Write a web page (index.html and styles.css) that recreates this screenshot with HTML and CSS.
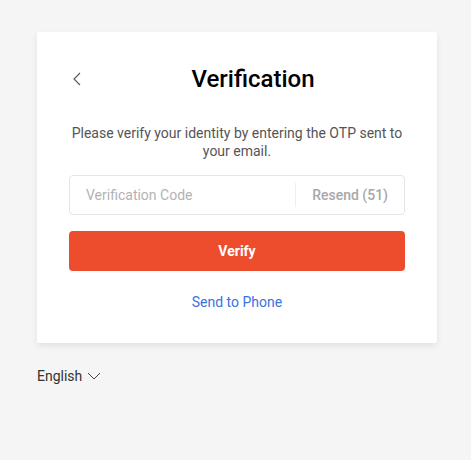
FILE: index.html
```html
<!DOCTYPE html>
<html lang="en">
<head>
  <meta charset="UTF-8">
  <title>Verification</title>
  <link rel="stylesheet" href="styles.css">
</head>
<body>
  <div class="card">
    <div class="header">
      <button class="back" aria-label="Back">
        <svg width="10" height="14" viewBox="0 0 10 14"><path d="M8 1 L2 7 L8 13" fill="none" stroke="#555" stroke-width="1.1"/></svg>
      </button>
      <h2>Verification</h2>
    </div>
    <p class="info">Please verify your identity by entering the OTP sent to your email.</p>
    <div class="code-box">
      <input type="text" placeholder="Verification Code">
      <span class="divider"></span>
      <span class="resend">Resend (51)</span>
    </div>
    <button class="verify">Verify</button>
    <a class="alt" href="#">Send to Phone</a>
  </div>
  <div class="lang">
    English
    <svg width="14" height="10" viewBox="0 0 14 10"><path d="M1 2 L7 8 L13 2" fill="none" stroke="#444" stroke-width="1"/></svg>
  </div>
</body>
</html>
```

FILE: styles.css
```css
body {
  margin: 0;
  padding: 32px 37px;
  background: #f5f5f5;
  font-family: Roboto, 'Liberation Sans', sans-serif;
  font-size: 14px;
}
.card {
  width: 400px;
  box-sizing: border-box;
  background: white;
  padding: 31px 32px 32px;
  box-shadow: 0 3px 6px rgba(0,0,0,0.08);
  border-radius: 2px;
  display: flex;
  flex-direction: column;
}
.header {
  height: 32px;
  display: flex;
  align-items: center;
}
.header h2 {
  flex: 1;
  margin: 0;
  text-align: center;
  font-size: 24px;
  font-weight: 500;
  color: #000;
}
.back {
  width: 32px;
  flex-shrink: 0;
  padding: 0 0 0 3px;
  background: none;
  border: none;
  cursor: pointer;
  display: flex;
}
.info {
  margin: 29px 0 0;
  text-align: center;
  line-height: 18px;
  color: #555;
}
.code-box {
  margin-top: 15px;
  height: 40px;
  box-sizing: border-box;
  border: 1px solid #e5e5e5;
  border-radius: 4px;
  display: flex;
  align-items: center;
}
.code-box input {
  flex: 1;
  min-width: 0;
  border: none;
  outline: none;
  padding: 0 0 0 16px;
  font-family: inherit;
  font-size: 14px;
  background: transparent;
}
.code-box input::placeholder {
  color: #b3b3b3;
}
.divider {
  width: 1px;
  height: 24px;
  background: #eee;
}
.resend {
  padding: 0 16px;
  color: #a8a8a8;
  font-weight: 500;
}
.verify {
  margin-top: 16px;
  height: 40px;
  border: none;
  border-radius: 4px;
  background: #ee4d2d;
  color: white;
  font-family: inherit;
  font-size: 14px;
  font-weight: 700;
  cursor: pointer;
}
.alt {
  margin-top: 22px;
  align-self: center;
  line-height: 18px;
  color: #3a72e0;
  text-decoration: none;
}
.lang {
  margin-top: 24px;
  display: flex;
  align-items: center;
  gap: 5px;
  color: #333;
  line-height: 18px;
}
```
